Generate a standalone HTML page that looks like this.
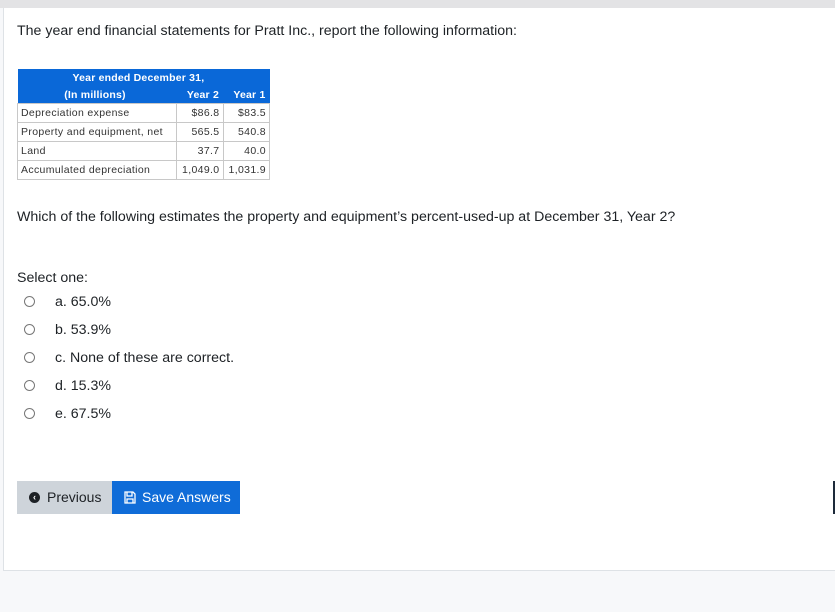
<!DOCTYPE html>
<html><head><style>
body{margin:0;width:835px;height:612px;background:#f7f8fa;font-family:"Liberation Sans",sans-serif;color:#1d2125;position:relative;overflow:hidden}
.top{position:absolute;left:0;top:0;width:835px;height:8px;background:#e3e3e5}
.card{position:absolute;left:3px;top:8px;width:840px;height:562px;background:#fff;border:1px solid #dee2e6;border-top:none}
.t{position:absolute;font-size:14.2px;white-space:nowrap}
table{position:absolute;left:17px;top:69px;border-collapse:collapse;font-size:10.5px;letter-spacing:.35px;width:253px}
th{background:#0a68d8;color:#fff;font-weight:bold;height:17px;padding:0 4px;letter-spacing:.2px}
td{border:1px solid #c8c8c8;height:18px;padding:0 3px;color:#333}
td.n{text-align:right}
.r{position:absolute;left:24px;width:9px;height:9px;border:1px solid #777;border-radius:50%}
.btn{position:absolute;top:481px;height:33px;font-size:14px;line-height:33px}
</style></head><body>
<div class="top"></div>
<div class="card"></div>
<div class="t" style="left:17px;top:23px">The year end financial statements for Pratt Inc., report the following information:</div>
<table>
<tr><th colspan="3" style="text-align:left;padding-left:55px">Year ended December 31,</th></tr>
<tr><th style="text-align:center;padding-left:0">(In millions)</th><th style="text-align:right">Year 2</th><th style="text-align:right">Year 1</th></tr>
<tr><td style="width:152px">Depreciation expense</td><td class="n">$86.8</td><td class="n">$83.5</td></tr>
<tr><td>Property and equipment, net</td><td class="n">565.5</td><td class="n">540.8</td></tr>
<tr><td>Land</td><td class="n">37.7</td><td class="n">40.0</td></tr>
<tr><td>Accumulated depreciation</td><td class="n">1,049.0</td><td class="n">1,031.9</td></tr>
</table>
<div class="t" style="left:17px;top:209px">Which of the following estimates the property and equipment’s percent-used-up at December 31, Year 2?</div>
<div class="t" style="left:17px;top:270px">Select one:</div>
<div class="r" style="top:296px"></div><div class="t" style="left:55px;top:294px">a. 65.0%</div>
<div class="r" style="top:324px"></div><div class="t" style="left:55px;top:322px">b. 53.9%</div>
<div class="r" style="top:352px"></div><div class="t" style="left:55px;top:350px">c. None of these are correct.</div>
<div class="r" style="top:380px"></div><div class="t" style="left:55px;top:378px">d. 15.3%</div>
<div class="r" style="top:408px"></div><div class="t" style="left:55px;top:406px">e. 67.5%</div>
<div class="btn" style="left:17px;width:95px;background:#ced4da;color:#1d2125">
<span style="position:absolute;left:12px;top:11px;width:11px;height:11px;border-radius:50%;background:#1d2125"></span>
<span style="position:absolute;left:16px;top:11px;color:#fff;font-size:9px;line-height:11px;font-weight:bold">‹</span>
<span style="position:absolute;left:30px">Previous</span></div>
<div class="btn" style="left:112px;width:128px;background:#0f6cd8;color:#fff">
<svg style="position:absolute;left:12px;top:10px" width="12" height="13" viewBox="0 0 12 13"><path d="M1 1h8l2 2v9H1z M3 1v4h5V1 M3 12V8h6v4" fill="none" stroke="#fff" stroke-width="1.3"/></svg>
<span style="position:absolute;left:30px">Save Answers</span></div>
<div style="position:absolute;left:833px;top:481px;width:2px;height:33px;background:#1d2a3a"></div>
</body></html>
